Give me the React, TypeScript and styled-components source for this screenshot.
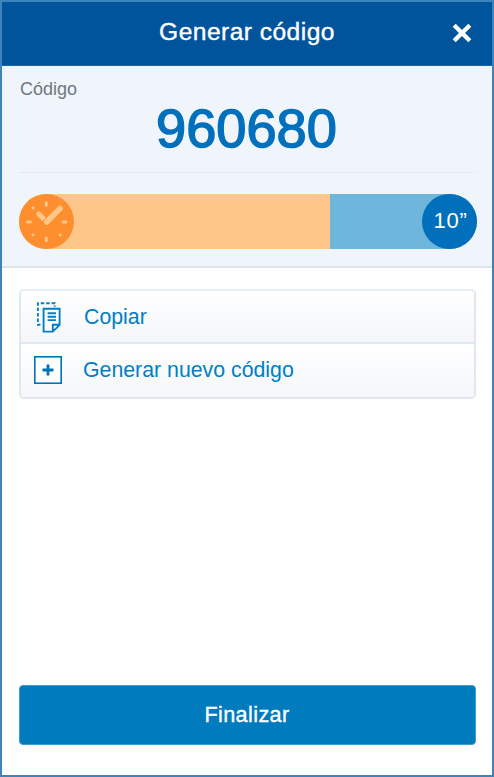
import React from "react";
import styled, { createGlobalStyle, css } from "styled-components";

const GlobalStyle = createGlobalStyle`
  * { box-sizing: border-box; }
  body { margin: 0; font-family: "Liberation Sans", Arial, sans-serif; }
`;

const Screen = styled.main`
  display: flex;
  flex-direction: column;
  width: 494px;
  height: 777px;
  border: 2px solid #3d84bc;
  background: #fff;
`;

const Header = styled.header`
  display: grid;
  grid-template-columns: 60px 1fr 60px;
  align-items: center;
  height: 64px;
  padding-bottom: 4px;
  background: #00549b;
  border-bottom: 1px solid #1568a8;
`;

const Title = styled.h1`
  grid-column: 2;
  margin: 0;
  font-size: 24.6px;
  font-weight: 400;
  line-height: 30px;
  letter-spacing: 0.45px;
  text-align: center;
  color: #fff;
  -webkit-text-stroke: 0.4px #fff;
`;

const CloseButton = styled.button`
  display: flex;
  justify-self: center;
  padding: 0;
  margin: 3px 1px 0 0;
  border: 0;
  background: none;
`;

const CodePanel = styled.section`
  height: 202px;
  padding: 12px 16px 0 17px;
  background: #eff5fa;
  border-bottom: 2px solid #dee3e9;
`;

const Label = styled.div`
  padding-left: 1px;
  font-size: 18px;
  line-height: 22px;
  color: #6f7781;
`;

const Code = styled.div`
  height: 72px;
  padding-right: 2px;
  font-size: 54.2px;
  line-height: 56px;
  text-align: center;
  color: #0070bc;
  -webkit-text-stroke: 1.5px #0070bc;
`;

const Divider = styled.div`
  height: 1px;
  margin-bottom: 20.5px;
  border-top: 1px dotted #dce2e7;
`;

const TimerTrack = styled.div`
  display: flex;
  justify-content: space-between;
  width: 458px;
  height: 55px;
  margin-left: -0.5px;
  border-radius: 28px;
  background: linear-gradient(to right, #ffc68a 311px, #6fb6dd 311px);
`;

const TimerCap = styled.div<{ $tone: "elapsed" | "remaining" }>`
  display: flex;
  align-items: center;
  justify-content: center;
  width: 55px;
  height: 55px;
  border-radius: 50%;
  font-size: 22px;
  letter-spacing: 0.8px;
  padding-left: ${({ $tone }) => ($tone === "remaining" ? "3px" : "0")};
  color: #fff;
  background: ${({ $tone }) => ($tone === "elapsed" ? "#ff8f2e" : "#0070bc")};
`;

const Actions = styled.div`
  margin: 21px 16px 0 17px;
  border: 2px solid #dfe8f1;
  border-top-color: #e6edf4;
  border-radius: 5px;
  overflow: hidden;
`;

const Action = styled.button<{ $divided?: boolean }>`
  display: grid;
  grid-template-columns: 49px 1fr;
  align-items: center;
  width: 100%;
  height: 53px;
  padding: 0 0 1px 13px;
  border: 0;
  background: linear-gradient(#fff, #f4f6f9);
  font: 400 21.3px "Liberation Sans", Arial, sans-serif;
  text-align: left;
  color: #0080c3;
  ${({ $divided }) =>
    $divided &&
    css`
      padding-bottom: 0;
      border-bottom: 2px solid #dfe9f1;
    `}
`;

const ActionText = styled.span<{ $indent: number }>`
  padding-left: ${({ $indent }) => $indent}px;
  line-height: 26px;
`;

const Footer = styled.footer`
  margin-top: auto;
  padding: 0 16px 30px 17px;
`;

const FinishButton = styled.button`
  display: block;
  width: 457px;
  height: 60px;
  padding: 0 1px 0 0;
  border: 1px solid #3c9fd0;
  border-radius: 4px;
  background: #007bbd;
  color: #fff;
  font: 400 21.6px "Liberation Sans", Arial, sans-serif;
  letter-spacing: 0.4px;
  -webkit-text-stroke: 0.35px #fff;
`;

const CloseIcon = () => (
  <svg width="20" height="20" viewBox="0 0 20 20" stroke="#fff" strokeWidth="4.3">
    <path d="M2.2 2.2 17.8 17.8M17.8 2.2 2.2 17.8" />
  </svg>
);

const ClockIcon = () => (
  <svg width="55" height="55" viewBox="0 0 55 55" fill="none" stroke="#ffc68a" strokeLinecap="round">
    <path
      strokeWidth="2.8"
      d="M27.3 8.6v3M27.3 43.8v3M8.5 28h3M44 28h3M14 14h.1M14 41h.1M41.2 41h.1"
    />
    <path strokeWidth="5" d="m19.7 20 6 6" />
    <path stroke="#ff8f2e" strokeWidth="7" d="m25.2 30.5 8-8" strokeLinecap="butt" />
    <path strokeWidth="5.5" d="M27.7 28 41 14.5" />
  </svg>
);

const CopyIcon = () => (
  <svg width="30" height="32" viewBox="0 0 30 32" fill="none" stroke="#0080c3" strokeWidth="1.9">
    <path d="M6.4 23.8H3.9V2.2h16.8v3.5" strokeDasharray="3.4 2" />
    <path fill="#fff" d="M9.6 7.7h16v16.2l-6.8 6.7H9.6zM18.8 30.4v-6.6h6.6" />
    <path d="M13.6 12.3h8.4M13.6 15.7h8.4M13.6 19.1h8.4" />
  </svg>
);

const AddIcon = () => (
  <svg width="28" height="28" viewBox="0 0 28 28" fill="none" stroke="#0071bb">
    <rect x=".8" y=".8" width="26.4" height="26.4" strokeWidth="1.6" fill="#fff" />
    <path strokeWidth="2.8" d="M8.5 14h11M14 8.5v11" />
  </svg>
);

export default function App() {
  return (
    <>
      <GlobalStyle />
      <Screen>
        <Header>
          <Title>Generar código</Title>
          <CloseButton aria-label="Cerrar">
            <CloseIcon />
          </CloseButton>
        </Header>
        <CodePanel>
          <Label>Código</Label>
          <Code>960680</Code>
          <Divider />
          <TimerTrack>
            <TimerCap $tone="elapsed">
              <ClockIcon />
            </TimerCap>
            <TimerCap $tone="remaining">10”</TimerCap>
          </TimerTrack>
        </CodePanel>
        <Actions>
          <Action $divided>
            <CopyIcon />
            <ActionText $indent={1}>Copiar</ActionText>
          </Action>
          <Action>
            <AddIcon />
            <ActionText $indent={0}>Generar nuevo código</ActionText>
          </Action>
        </Actions>
        <Footer>
          <FinishButton>Finalizar</FinishButton>
        </Footer>
      </Screen>
    </>
  );
}
